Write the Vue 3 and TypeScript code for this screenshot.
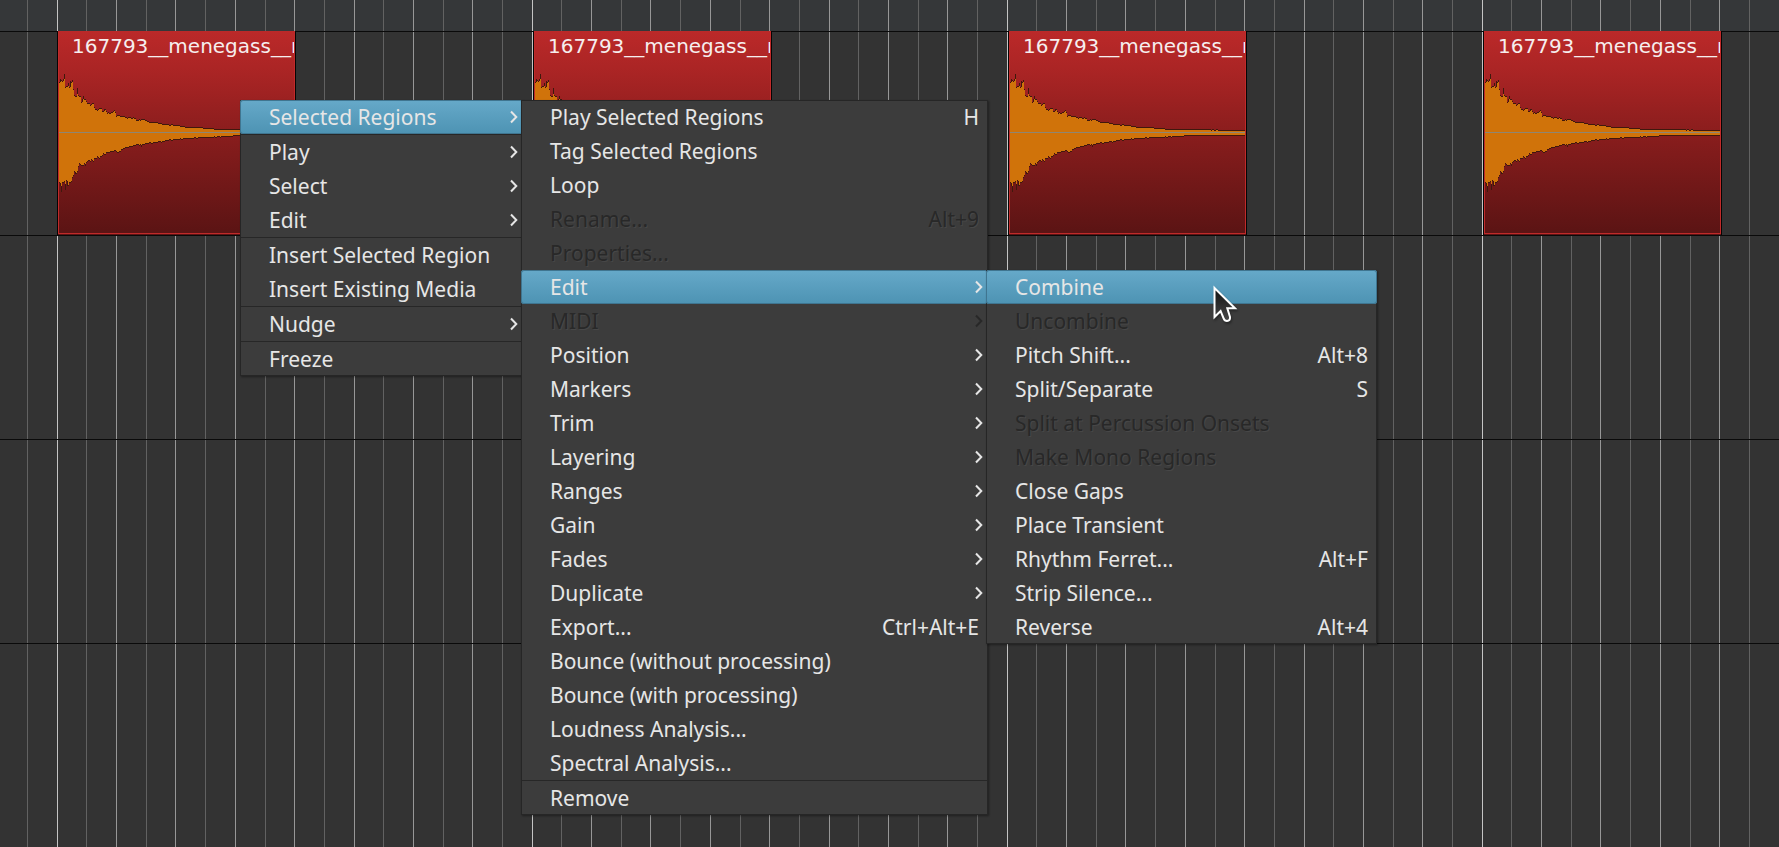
<script setup lang="ts">
interface MenuItem {
  label: string
  key?: string
  sub?: boolean
  off?: boolean
  active?: boolean
  sep?: boolean
}

const menus: { name: string; items: MenuItem[] }[] = [
  {
    name: 'track',
    items: [
      { label: 'Selected Regions', sub: true, active: true },
      { label: 'Play', sub: true, sep: true },
      { label: 'Select', sub: true },
      { label: 'Edit', sub: true },
      { label: 'Insert Selected Region', sep: true },
      { label: 'Insert Existing Media' },
      { label: 'Nudge', sub: true, sep: true },
      { label: 'Freeze', sep: true },
    ],
  },
  {
    name: 'regions',
    items: [
      { label: 'Play Selected Regions', key: 'H' },
      { label: 'Tag Selected Regions' },
      { label: 'Loop' },
      { label: 'Rename...', key: 'Alt+9', off: true },
      { label: 'Properties...', off: true },
      { label: 'Edit', sub: true, active: true },
      { label: 'MIDI', sub: true, off: true },
      { label: 'Position', sub: true },
      { label: 'Markers', sub: true },
      { label: 'Trim', sub: true },
      { label: 'Layering', sub: true },
      { label: 'Ranges', sub: true },
      { label: 'Gain', sub: true },
      { label: 'Fades', sub: true },
      { label: 'Duplicate', sub: true },
      { label: 'Export...', key: 'Ctrl+Alt+E' },
      { label: 'Bounce (without processing)' },
      { label: 'Bounce (with processing)' },
      { label: 'Loudness Analysis...' },
      { label: 'Spectral Analysis...' },
      { label: 'Remove', sep: true },
    ],
  },
  {
    name: 'edit',
    items: [
      { label: 'Combine', active: true },
      { label: 'Uncombine', off: true },
      { label: 'Pitch Shift...', key: 'Alt+8' },
      { label: 'Split/Separate', key: 'S' },
      { label: 'Split at Percussion Onsets', off: true },
      { label: 'Make Mono Regions', off: true },
      { label: 'Close Gaps' },
      { label: 'Place Transient' },
      { label: 'Rhythm Ferret...', key: 'Alt+F' },
      { label: 'Strip Silence...' },
      { label: 'Reverse', key: 'Alt+4' },
    ],
  },
]

// Timeline geometry: one bar is 475px wide and split into 16 grid steps.
const origin = 57
const bar = 475
const grid = Array.from({ length: 140 }, (_, i) => {
  const k = i - 1
  return {
    x: Math.floor(origin + (k * bar) / 16 + 0.2),
    kind: k % 16 === 0 ? 'bar' : k % 2 === 0 ? 'beat' : 'tick',
  }
})
const regions = [0, 1, 2, 3].map((n) => origin + n * bar + (n > 0 ? 1 : 0))

// Peak envelope as [column, height] pairs above and below the centre line.
type Peak = [number, number]
const upper: Peak[] = [
  [0, 51], [1, 53], [2, 51], [4, 52], [5, 59], [6, 46], [8, 47], [9, 49], [10, 46], [11, 50], [13, 51],
  [14, 43], [15, 38], [17, 35], [18, 43], [19, 37], [20, 36], [21, 37], [22, 31], [24, 35], [27, 32],
  [28, 30], [31, 27], [34, 28], [36, 24], [38, 23], [41, 24], [44, 21], [46, 23], [48, 19], [51, 20],
  [54, 20], [55, 22], [57, 17], [63, 16], [68, 15], [75, 14], [78, 12], [84, 13], [91, 10], [98, 10],
  [104, 8], [118, 7], [128, 5], [141, 5], [158, 3], [175, 3], [235, 2],
]
const lower: Peak[] = [
  [0, 50], [1, 54], [2, 59], [3, 51], [5, 49], [6, 57], [7, 49], [8, 53], [10, 50], [12, 48], [14, 43],
  [15, 39], [17, 41], [18, 38], [20, 32], [23, 33], [26, 32], [29, 28], [34, 28], [37, 25], [41, 25],
  [44, 22], [49, 20], [56, 18], [59, 20], [64, 16], [71, 14], [77, 12], [82, 13], [87, 11], [98, 10],
  [107, 8], [127, 6], [147, 5], [167, 4], [181, 3], [235, 3],
]
const level = (p: Peak[], x: number) => {
  let i = 0
  while (i < p.length - 2 && p[i + 1][0] <= x) i++
  const [x0, y0] = p[i]
  const [x1, y1] = p[i + 1]
  const jitter = ((x * 37 + y0 * 11) % 7) / 3 - 1
  return Math.max(2, Math.round(y0 + ((y1 - y0) * (x - x0)) / (x1 - x0) + jitter * Math.min(1, y0 / 25)))
}
const cols = Array.from({ length: 235 }, (_, x) => x)
const mid = 101
const base = mid + 1
const up = cols.map((x) => `V${mid - level(upper, x)}h1`).join('')
const down = [...cols].reverse().map((x) => `V${base + level(lower, x)}h-1`).join('')
const wave = `M0 ${mid}${up}${down}Z`
// The outline of a column reaches down to its lower neighbour, so that steps stay joined.
const outline = (p: Peak[], y: number, dir: number) =>
  cols.map((x) => {
    const h = level(p, x)
    const drop = h - Math.min(level(p, Math.max(0, x - 1)), h)
    return `M${x} ${y - dir * h}h1v${dir * Math.max(1, Math.min(drop, 6))}h-1z`
  }).join('')
const crest = outline(upper, mid, 1)
const trough = outline(lower, base, -1)
</script>

<template>
  <main class="editor">
    <svg class="grid" aria-hidden="true">
      <rect v-for="g in grid" :key="g.x" :class="g.kind" :x="g.x" y="0" width="1" height="100%" />
    </svg>
    <div class="ruler"></div>
    <section class="lane">
      <article v-for="x in regions" :key="x" class="region" :style="{ left: x + 'px' }">
        <svg class="wave" viewBox="0 0 235 202" width="235" height="202" shape-rendering="crispEdges" aria-hidden="true">
          <path class="body" :d="wave" />
          <path class="edge" :d="crest" />
          <path class="edge" :d="trough" />
          <rect class="axis" x="0" :y="mid" width="235" height="1" />
        </svg>
        <h2 class="title">167793__menegass__n</h2>
      </article>
    </section>
    <section class="lane"></section>
    <section class="lane"></section>
    <section class="lane"></section>

    <nav class="menus">
      <ul v-for="m in menus" :key="m.name" class="menu" :class="m.name" role="menu">
        <li v-for="it in m.items" :key="it.label" role="none" :class="{ sep: it.sep }">
          <button class="item" :class="{ active: it.active }" role="menuitem" :disabled="it.off">
            <span>{{ it.label }}</span>
            <kbd v-if="it.key">{{ it.key }}</kbd>
            <svg v-if="it.sub" class="chev" viewBox="0 0 8 14" width="8" height="14" aria-hidden="true">
              <path d="M1 1.5 6.3 7 1 12.5" />
            </svg>
          </button>
        </li>
      </ul>
    </nav>

    <svg class="cursor" viewBox="0 0 28 42" width="28" height="42" aria-hidden="true">
      <defs>
        <linearGradient id="arrow" x1="0" y1="0" x2="0" y2="1">
          <stop offset="0" stop-color="#111" />
          <stop offset="1" stop-color="#484848" />
        </linearGradient>
      </defs>
      <path d="M1.5 3 22 23.2H14.3L17 32Q17.4 35.8 14 36 11.6 36 10.6 33.4L7.6 26 1.5 32Z" />
    </svg>
  </main>
</template>

<style>
body {
  margin: 0;
  background: #333;
}
</style>

<style scoped>
.editor {
  position: relative;
  display: flex;
  flex-direction: column;
  height: 100vh;
  overflow: hidden;
  background: #333;
  font-family: 'Noto Sans', 'Open Sans', sans-serif;
}
.grid {
  position: absolute;
  inset: 0;
  width: 100%;
  height: 100%;
}
.bar { fill: #c4c4c4; }
.beat { fill: #979797; }
.tick { fill: #626262; }
.ruler {
  flex: none;
  height: 31px;
  background: rgba(60, 66, 76, 0.25);
}
.lane {
  position: relative;
  flex: none;
  box-sizing: border-box;
  height: 204px;
  border-top: 1px solid #0a0a0a;
}
.region {
  position: absolute;
  top: -1px;
  box-sizing: border-box;
  width: 239px;
  height: 204px;
  overflow: hidden;
  border: solid #050505;
  border-width: 0 1px;
  background: linear-gradient(#bb2929 0%, #a82424 22%, #8a1d1d 50%, #5c1414 98%);
}
.region::after {
  content: '';
  position: absolute;
  inset: 0 0 1px;
  border: 1px solid #c02a2a;
  border-top: 0;
}
.title {
  margin: 0;
  padding: 4px 0 0 14px;
  color: #f6eeee;
  font: 400 20px/23px 'DejaVu Sans', sans-serif;
  white-space: nowrap;
}
.wave {
  position: absolute;
  top: 0;
  left: 1px;
}
.body { fill: #d0730a; }
.edge { fill: #40180d; }
.axis { fill: #8f8673; }
.menus {
  position: absolute;
  top: 100px;
  left: 240px;
  display: flex;
  align-items: flex-start;
}
.menu {
  position: relative;
  z-index: 0;
  box-sizing: border-box;
  margin: 0;
  padding: 0;
  list-style: none;
  background: #3c3c3c;
  box-shadow: 1px 1px 2px rgba(0, 0, 0, 0.4);
}
.menu::after {
  content: '';
  position: absolute;
  inset: 0;
  border: 1px solid #262626;
  pointer-events: none;
}
.menu + .menu { margin-left: -2px; }
.track { width: 283px; }
.regions { width: 467px; }
.edit {
  width: 391px;
  margin-top: 170px;
}
.sep { border-top: 1px solid #272727; }
.item {
  display: flex;
  align-items: center;
  justify-content: space-between;
  width: 100%;
  height: 34px;
  padding: 0 9px 0 29px;
  border: 0;
  background: none;
  color: #e6e6e6;
  font: inherit;
  font-size: 21px;
  line-height: 34px;
  text-align: left;
  white-space: nowrap;
}
.item.active {
  position: relative;
  z-index: 1;
  border-radius: 3px;
  background: linear-gradient(#66a9c9, #4d93b3);
  box-shadow: inset 0 0 0 1px #3f7590;
}
.item:disabled {
  color: #282828;
  text-shadow: 1px 1px 0 #474747;
}
kbd { font: inherit; }
.chev {
  margin-right: -4px;
  fill: none;
  stroke: currentColor;
  stroke-width: 2;
}
.cursor {
  position: absolute;
  z-index: 2;
  top: 285px;
  left: 1213px;
  filter: drop-shadow(1px 2px 1px rgba(0, 0, 0, 0.35));
}
.cursor path {
  fill: url(#arrow);
  stroke: #fff;
  stroke-width: 2;
}
</style>
